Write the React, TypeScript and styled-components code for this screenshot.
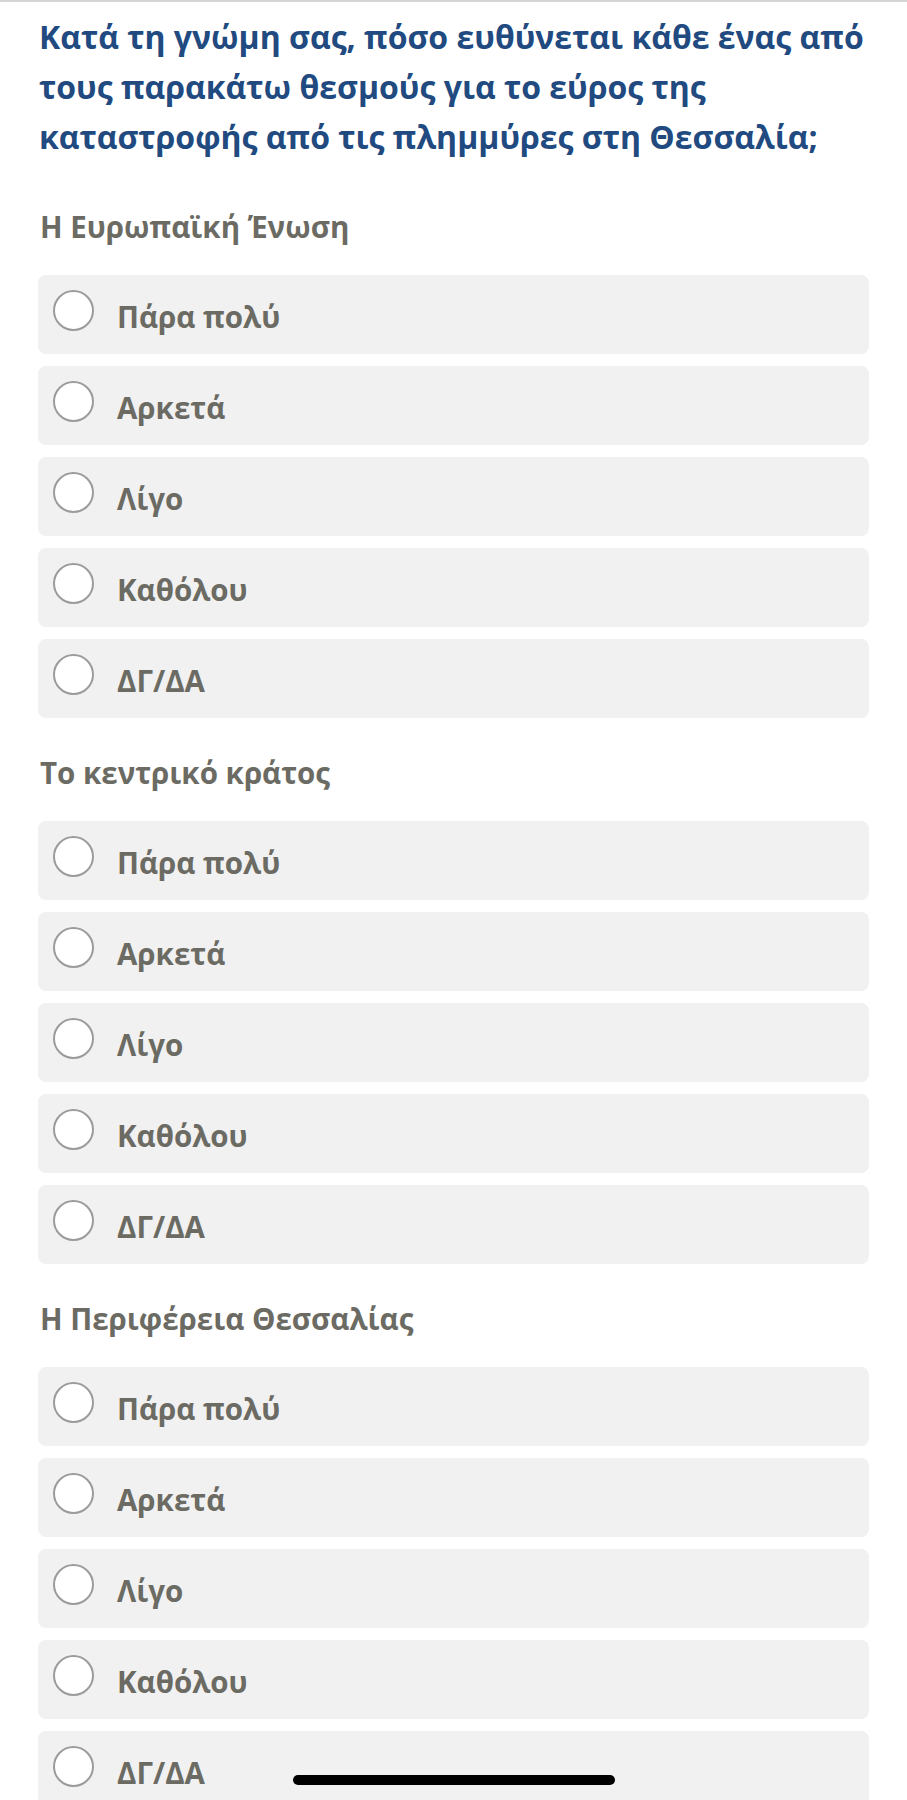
import React from "react";
import styled, { createGlobalStyle } from "styled-components";

const GlobalStyle = createGlobalStyle`
  html, body {
    margin: 0;
    padding: 0;
    background: #ffffff;
  }
  body {
    font-family: "Open Sans", "Noto Sans", "DejaVu Sans", sans-serif;
    -webkit-font-smoothing: antialiased;
  }
`;

const Page = styled.main`
  width: 907px;
  min-height: 1800px;
  box-sizing: border-box;
  border-top: 2px solid #d6d6d6;
  padding: 10px 38px 0 38px;
  overflow: hidden;
  position: relative;
`;

const Title = styled.h1`
  margin: 0 0 45px 0;
  font-size: 32px;
  line-height: 50px;
  font-weight: 700;
  color: #214a80;
  padding-left: 1px;
`;

const Section = styled.section`
  display: flex;
  flex-direction: column;
  margin-bottom: 35px;
`;

const Label = styled.h2`
  margin: 0 0 28px 0;
  font-size: 29.5px;
  line-height: 40px;
  font-weight: 700;
  color: #6b6b64;
  padding-left: 2px;
`;

const Options = styled.div`
  display: flex;
  flex-direction: column;
  gap: 12px;
`;

const Option = styled.label`
  display: flex;
  align-items: center;
  gap: 23px;
  height: 79px;
  box-sizing: border-box;
  padding-left: 15px;
  background: #f1f1f1;
  border-radius: 8px;
  cursor: pointer;
`;

const Radio = styled.span`
  flex: none;
  width: 41px;
  height: 41px;
  box-sizing: border-box;
  border-radius: 50%;
  border: 2px solid #9b9b9b;
  background: #ffffff;
  margin-top: -8px;
`;

const OptionText = styled.span`
  font-size: 29.5px;
  line-height: 40px;
  font-weight: 700;
  color: #6b6b64;
  margin-top: 4px;
`;

const HomeIndicator = styled.div`
  position: absolute;
  top: 1773px;
  left: 50%;
  transform: translateX(-50%);
  width: 322px;
  height: 10px;
  border-radius: 5px;
  background: #000000;
`;

const sections = [
  "Η Ευρωπαϊκή Ένωση",
  "Το κεντρικό κράτος",
  "Η Περιφέρεια Θεσσαλίας",
];

const answers = ["Πάρα πολύ", "Αρκετά", "Λίγο", "Καθόλου", "ΔΓ/ΔΑ"];

export default function App() {
  return (
    <>
      <GlobalStyle />
      <Page>
        <Title>
          Κατά τη γνώμη σας, πόσο ευθύνεται κάθε ένας από τους παρακάτω
          θεσμούς για το εύρος της καταστροφής από τις πλημμύρες στη
          Θεσσαλία;
        </Title>
        {sections.map((s) => (
          <Section key={s}>
            <Label>{s}</Label>
            <Options>
              {answers.map((a) => (
                <Option key={a}>
                  <Radio />
                  <OptionText>{a}</OptionText>
                </Option>
              ))}
            </Options>
          </Section>
        ))}
        <HomeIndicator />
      </Page>
    </>
  );
}
